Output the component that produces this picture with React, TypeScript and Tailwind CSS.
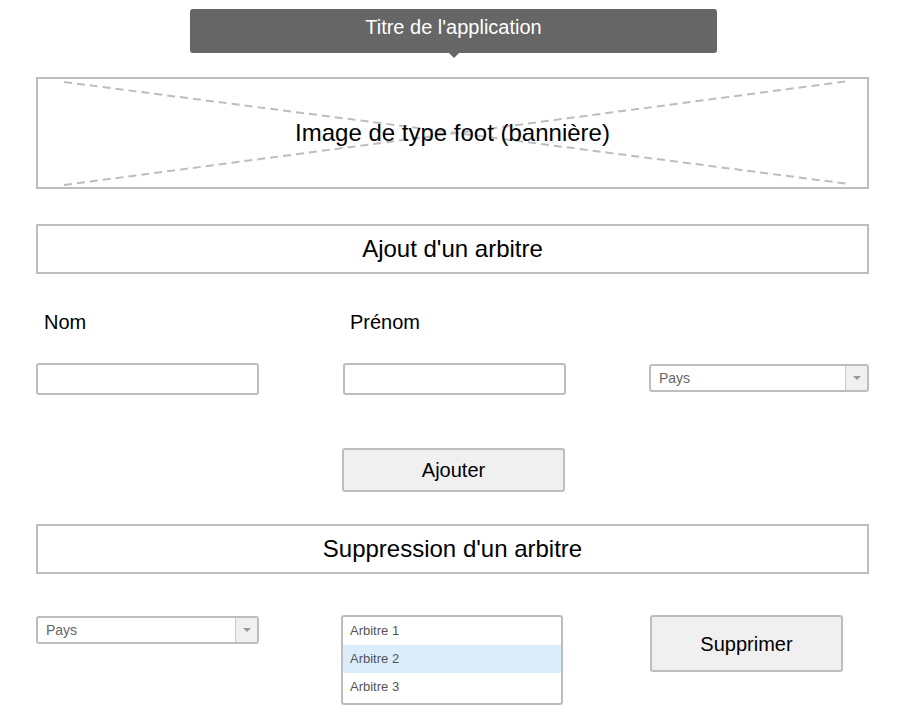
const font = { fontFamily: '"Liberation Sans", Arial, sans-serif' };

const SelectBox = ({ width }: { width: string }) => (
  <div className={`flex h-[28px] ${width} overflow-hidden rounded-[3px] border-2 border-[#bdbdbd] bg-white`}>
    <div className="flex flex-1 items-center pl-[8px] text-[14px] text-[#666]">Pays</div>
    <div className="flex w-[22px] items-center justify-center border-l border-[#c8c8c8] bg-[#f0f0f0]">
      <div className="h-0 w-0 border-x-[4px] border-t-[4px] border-x-transparent border-t-[#999]" />
    </div>
  </div>
);

const SectionHeader = ({ label }: { label: string }) => (
  <div className="mx-[36px] flex h-[50px] items-center justify-center border-2 border-[#bdbdbd] text-[24px] text-black">
    {label}
  </div>
);

export default function App() {
  return (
    <div className="min-h-[727px] w-[905px] bg-white" style={font}>
      {/* Titre */}
      <div className="flex justify-center pt-[9px]">
        <div className="relative ml-[2px] flex h-[44px] w-[527px] justify-center rounded-[3px] bg-[#666666] pt-[3px] text-[20px] text-white">
          Titre de l'application
          <div className="absolute bottom-[-5px] left-1/2 h-0 w-0 -translate-x-1/2 border-x-[5px] border-t-[5px] border-x-transparent border-t-[#666666]" />
        </div>
      </div>

      {/* Bannière */}
      <div className="relative mx-[36px] mt-[24px] flex h-[112px] items-center justify-center border-2 border-[#bdbdbd] text-[24px] text-black">
        <svg className="absolute inset-0 h-full w-full" viewBox="0 0 829 108" preserveAspectRatio="none">
          <line x1="26" y1="3" x2="811" y2="105" stroke="#bdbdbd" strokeWidth="2" strokeDasharray="8 5" />
          <line x1="26" y1="106" x2="811" y2="2" stroke="#bdbdbd" strokeWidth="2" strokeDasharray="8 5" />
        </svg>
        <span className="relative">Image de type foot (bannière)</span>
      </div>

      <div className="mt-[35px]">
        <SectionHeader label="Ajout d'un arbitre" />
      </div>

      {/* Formulaire ajout */}
      <div className="mx-[36px] mt-[33px] flex text-[20px] text-black">
        <div className="w-[306px] pl-[8px]">Nom</div>
        <div className="pl-[8px]">Prénom</div>
      </div>
      <div className="mx-[36px] mt-[26px] flex items-start justify-between">
        <div className="h-[32px] w-[223px] rounded-[3px] border-2 border-[#bdbdbd] bg-white" />
        <div className="h-[32px] w-[223px] rounded-[3px] border-2 border-[#bdbdbd] bg-white" />
        <div className="mt-[1px]">
          <SelectBox width="w-[220px]" />
        </div>
      </div>
      <div className="mt-[53px] flex pl-[342px]">
        <button className="h-[44px] w-[223px] rounded-[3px] border-2 border-[#bdbdbd] bg-[#f0f0f0] text-[20px] text-black">
          Ajouter
        </button>
      </div>

      <div className="mt-[32px]">
        <SectionHeader label="Suppression d'un arbitre" />
      </div>

      {/* Suppression */}
      <div className="mx-[36px] mt-[41px] flex items-start">
        <div className="mt-[1px]">
          <SelectBox width="w-[223px]" />
        </div>
        <div className="ml-[82px] flex h-[90px] w-[222px] flex-col rounded-[3px] border-2 border-[#bdbdbd] bg-white text-[13px] text-[#555]">
          <div className="flex h-[28px] items-center pl-[7px]">Arbitre 1</div>
          <div className="flex h-[28px] items-center bg-[#dbecfa] pl-[7px]">Arbitre 2</div>
          <div className="flex h-[28px] items-center pl-[7px]">Arbitre 3</div>
        </div>
        <button className="ml-[87px] h-[57px] w-[193px] rounded-[3px] border-2 border-[#bdbdbd] bg-[#f0f0f0] text-[20px] text-black">
          Supprimer
        </button>
      </div>
    </div>
  );
}
